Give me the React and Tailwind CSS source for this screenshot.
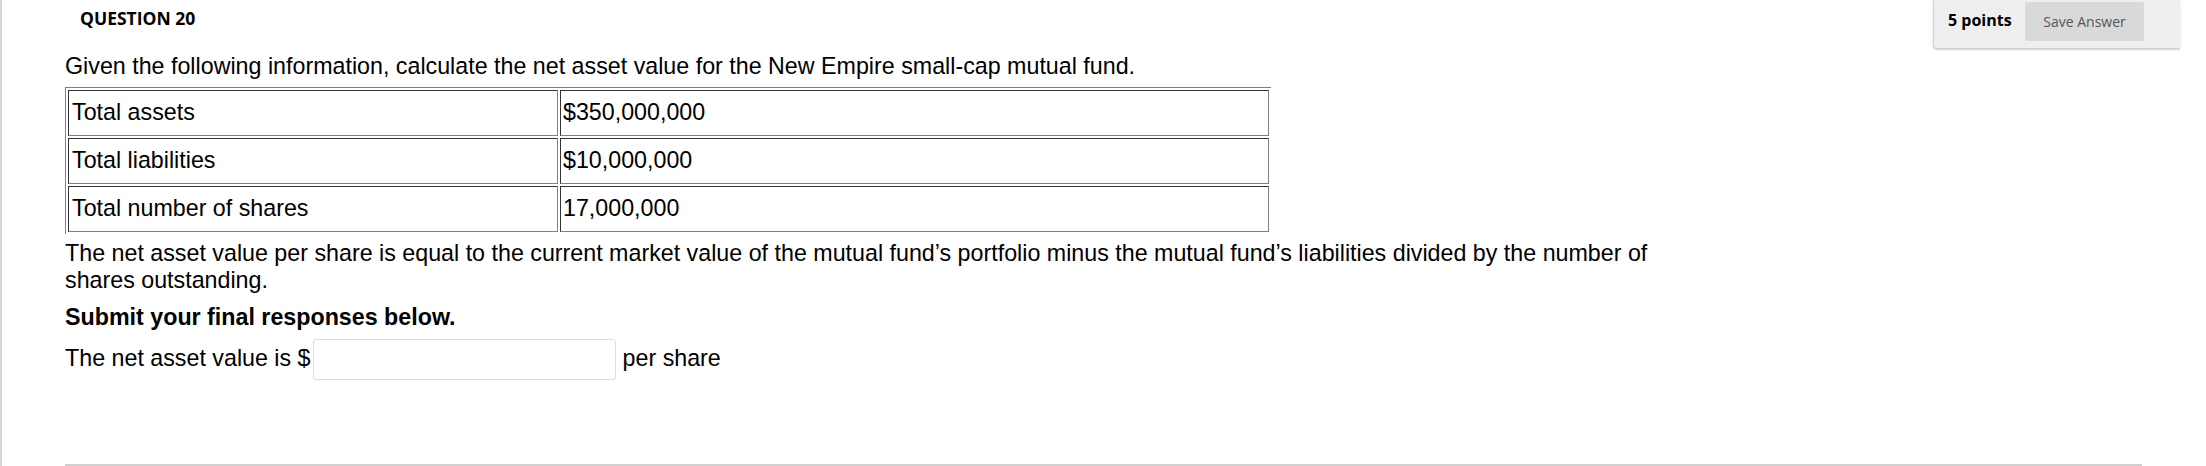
import React from "react";

const rows = [
  ["Total assets", "$350,000,000"],
  ["Total liabilities", "$10,000,000"],
  ["Total number of shares", "17,000,000"],
];

export default function App() {
  return (
    <div className="w-[2206px] h-[466px] bg-white border-l-2 border-[#d6d6d6] overflow-hidden">
      {/* Header */}
      <div className="flex items-start h-[49px]">
        <div
          className="pl-[78px] pt-[6px] text-[17.5px] font-bold text-black leading-[normal]"
          style={{ fontFamily: '"Open Sans", sans-serif' }}
        >
          QUESTION 20
        </div>
        <div
          className="ml-auto mr-[26px] h-[49px] w-[247px] flex items-start bg-[#efefef] border-l border-b border-[#d2d2d2] rounded-bl-[4px] shadow-[0_1px_2px_rgba(0,0,0,0.18)] pl-[14px]"
          style={{ fontFamily: '"Open Sans", sans-serif' }}
        >
          <span className="w-[77px] mt-[9px] text-[16px] font-bold text-black leading-[normal]">
            5 points
          </span>
          <button className="mt-[2px] w-[119px] h-[39px] bg-[#d9d9d9] rounded-[2px] flex items-center justify-center text-[14px] text-[#555555] leading-[normal]">
            Save Answer
          </button>
        </div>
      </div>

      {/* Body */}
      <div
        className="pl-[63px] text-black text-[23.25px] leading-[normal]"
        style={{ fontFamily: '"Liberation Sans", Arial, sans-serif' }}
      >
        <p className="mt-[4px]">
          Given the following information, calculate the net asset value for the New Empire small-cap mutual fund.
        </p>

        <table className="mt-[7px] w-[1206px] border-separate border-spacing-[2px] border-t border-l border-[#808080] border-r-[#333333] border-b-[#333333]">
          <tbody>
            {rows.map(([a, b]) => (
              <tr key={a}>
                <td className="w-[490px] pl-[3px] pt-[8px] pb-[9px] border-t border-l border-[#333333] border-r border-b border-r-[#808080] border-b-[#808080] align-top">
                  {a}
                </td>
                <td className="pl-[2px] pt-[8px] pb-[9px] border-t border-l border-[#333333] border-r border-b border-r-[#808080] border-b-[#808080] align-top">
                  {b}
                </td>
              </tr>
            ))}
          </tbody>
        </table>

        <p className="mt-[6px] w-[1640px]">
          The net asset value per share is equal to the current market value of the mutual fund’s portfolio minus the mutual fund’s liabilities divided by the number of shares outstanding.
        </p>

        <p className="mt-[10px] font-bold">Submit your final responses below.</p>

        <div className="mt-[8px] flex items-start">
          <span className="mt-[6px]">The net asset value is $</span>
          <input
            type="text"
            className="ml-[2px] mr-[7px] w-[303px] h-[41px] border border-[#dddddd] rounded-[3px] bg-white outline-none"
          />
          <span className="mt-[6px]">per share</span>
        </div>

        <div className="mt-[84px] w-[2077px] h-[2px] bg-[#d0d0d0]" />
      </div>
    </div>
  );
}
